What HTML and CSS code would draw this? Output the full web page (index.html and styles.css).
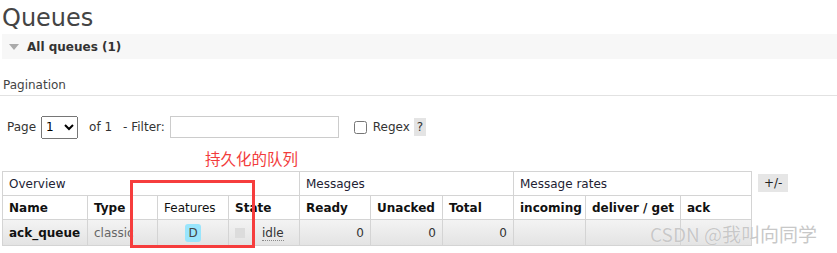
FILE: index.html
```html
<!DOCTYPE html>
<html lang="en">
<head>
    <meta charset="UTF-8">
    <title>Queues</title>
    <link rel="stylesheet" href="styles.css">
</head>
<body>

    <h1>Queues</h1>

    <!-- collapsible section header -->
    <div class="section-head">
        <span class="arrow"></span>
        <span>All queues (1)</span>
    </div>

    <div class="pagination-title">Pagination</div>

    <div class="pager">
        <span>Page</span>
        <select class="page-select"><option>1</option></select>
        <span class="of">of 1</span>
        <span>- Filter:</span>
        <input type="text" class="filter">
        <input type="checkbox" class="regex-box">
        <span>Regex</span>
        <span class="help">?</span>
    </div>

    <div class="table-wrap">
        <table class="queues">
            <colgroup>
                <col style="width:85px"><col style="width:70px"><col style="width:71px"><col style="width:71px">
                <col style="width:71px"><col style="width:72px"><col style="width:71px">
                <col style="width:72px"><col style="width:95px"><col style="width:71px">
            </colgroup>
            <thead>
                <tr class="group">
                    <th colspan="4">Overview</th>
                    <th colspan="3">Messages</th>
                    <th colspan="3">Message rates</th>
                </tr>
                <tr class="cols">
                    <th>Name</th>
                    <th>Type</th>
                    <th class="plain">Features</th>
                    <th>State</th>
                    <th>Ready</th>
                    <th>Unacked</th>
                    <th>Total</th>
                    <th>incoming</th>
                    <th>deliver / get</th>
                    <th>ack</th>
                </tr>
            </thead>
            <tbody>
                <tr>
                    <td class="name">ack_queue</td>
                    <td class="type">classic</td>
                    <td class="c"><span class="badge">D</span></td>
                    <td><span class="state-box"></span><span class="idle">idle</span></td>
                    <td class="r">0</td>
                    <td class="r">0</td>
                    <td class="r">0</td>
                    <td></td>
                    <td></td>
                    <td></td>
                </tr>
            </tbody>
        </table>
        <span class="toggle">+/-</span>
    </div>

    <!-- annotation drawn over the screenshot -->
    <div class="note">持久化的队列</div>
    <div class="note-box"></div>
    <div class="watermark">CSDN @我叫向同学</div>

</body>
</html>
```

FILE: styles.css
```css
body {
    margin: 0;
    font-family: "DejaVu Sans", Verdana, sans-serif;
    font-size: 12px;
    color: #333;
    background: #fff;
    position: relative;
    width: 837px;
    height: 253px;
    overflow: hidden;
}

h1 {
    margin: 0;
    padding: 2px 0 0 2px;
    font-size: 24px;
    font-weight: normal;
    line-height: 32px;
    color: #444;
}

.section-head {
    margin-left: 2px;
    height: 25px;
    background-color: #f7f7f7;
    display: flex;
    align-items: center;
    font-weight: bold;
    font-size: 12px;
    color: #333;
}

.arrow {
    width: 0;
    height: 0;
    margin: 1px 8px 0 7px;
    border-left: 5px solid transparent;
    border-right: 5px solid transparent;
    border-top: 6px solid #aaa;
}

.pagination-title {
    margin-top: 19px;
    padding: 0 0 3px 3px;
    border-bottom: 1px solid #e2e2e2;
    color: #444;
    line-height: 14px;
}

.pager {
    margin-top: 19px;
    padding-left: 7px;
    display: flex;
    align-items: center;
    height: 24px;
    color: #333;
}

.page-select {
    margin-left: 5px;
    width: 37px;
    height: 23px;
    font-family: "DejaVu Sans", sans-serif;
    font-size: 12px;
}

.of {
    margin-left: 11px;
    margin-right: 11px;
}

.filter {
    margin-left: 5px;
    width: 169px;
    height: 22px;
    box-sizing: border-box;
    border: 1px solid #ccc;
}

.regex-box {
    margin: 0 6px 0 15px;
    width: 13px;
    height: 13px;
}

.help {
    margin-left: 4px;
    padding: 2px 3px;
    background-color: #e4e4e4;
    color: #333;
}

.table-wrap {
    margin-top: 32px;
    padding-left: 2px;
    display: flex;
    align-items: flex-start;
}

.queues {
    border-collapse: collapse;
    table-layout: fixed;
    width: 749px;
}

.queues th, .queues td {
    border: 1px solid #d4d4d4;
    padding: 0 6px;
    text-align: left;
    white-space: nowrap;
    overflow: hidden;
}

.queues tr.group th {
    height: 23px;
    font-weight: normal;
    color: #223;
}

.queues tr.cols th {
    height: 23px;
    font-weight: bold;
    color: #111;
}

.queues th.plain {
    font-weight: normal !important;
}

.queues tbody tr {
    background: linear-gradient(#f3f3f3, #e3e3e3);
}

.queues td {
    height: 25px;
    color: #333;
}

.queues td.name {
    font-weight: bold;
    color: #111;
}

.queues td.type {
    color: #666;
}

.queues td.c {
    text-align: center;
}

.queues td.r {
    text-align: right;
}

.badge {
    display: inline-block;
    width: 16px;
    line-height: 18px;
    border-radius: 3px;
    background-color: #99e5fc;
    color: #444;
    text-align: center;
}

.state-box {
    display: inline-block;
    width: 10px;
    height: 10px;
    background-color: #dcdcdc;
    vertical-align: -1px;
}

.idle {
    margin-left: 17px;
    border-bottom: 1px dotted #888;
}

.toggle {
    margin: 3px 0 0 6px;
    padding: 2px 6px;
    background-color: #e6e6e6;
    color: #222;
}

/* overlays from the screenshot annotation */
.note {
    position: absolute;
    left: 205px;
    top: 147px;
    font-family: "Noto Sans CJK SC", sans-serif;
    font-size: 15.5px;
    color: #f23c3c;
}

.note-box {
    position: absolute;
    left: 130px;
    top: 180px;
    width: 119px;
    height: 62px;
    border: 3px solid #f63d3d;
}

.watermark {
    position: absolute;
    left: 650px;
    top: 220px;
    font-family: "Noto Sans CJK SC", sans-serif;
    font-size: 19px;
    color: #c8c8c8;
    text-shadow: 0 0 1px #fff;
}
```
